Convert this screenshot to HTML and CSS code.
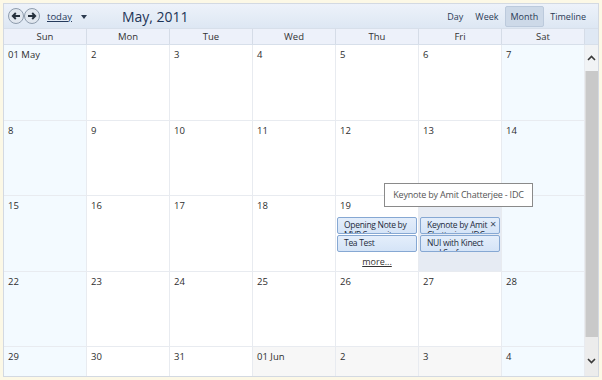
FILE: index.html
```html
<!DOCTYPE html>
<html lang="en">
<head>
    <meta charset="utf-8"/>
    <title>Scheduler - Month view</title>
    <link rel="stylesheet" href="styles.css">
</head>
<body>
    <div class="scheduler">
        <div class="toolbar">
            <div class="nav">
                <span class="navBtn">
                    <svg width="16" height="16" viewBox="0 0 16 16"><circle cx="8" cy="8" r="7.5" fill="#e1e7ef" stroke="#8e9cad"/><path d="M12 8H5M7.8 5L4.8 8L7.8 11" stroke="#26303c" stroke-width="1.9" fill="none"/></svg>
                </span>
                <span class="navBtn">
                    <svg width="16" height="16" viewBox="0 0 16 16"><circle cx="8" cy="8" r="7.5" fill="#e1e7ef" stroke="#8e9cad"/><path d="M4 8H11M8.2 5L11.2 8L8.2 11" stroke="#26303c" stroke-width="1.9" fill="none"/></svg>
                </span>
            </div>
            <a class="today" href="#">today</a>
            <span class="caret"></span>
            <span class="title">May, 2011</span>
            <div class="views">
                <span class="view">Day</span>
                <span class="view">Week</span>
                <span class="view selected">Month</span>
                <span class="view">Timeline</span>
            </div>
        </div>

        <div class="header">
            <div class="days">
                <div>Sun</div><div>Mon</div><div>Tue</div><div>Wed</div><div>Thu</div><div>Fri</div><div>Sat</div>
            </div>
            <div class="corner"></div>
        </div>

        <div class="body">
            <div class="month">
                <div class="cell weekend">01 May</div>
                <div class="cell">2</div>
                <div class="cell">3</div>
                <div class="cell">4</div>
                <div class="cell">5</div>
                <div class="cell">6</div>
                <div class="cell weekend">7</div>

                <div class="cell weekend">8</div>
                <div class="cell">9</div>
                <div class="cell">10</div>
                <div class="cell">11</div>
                <div class="cell">12</div>
                <div class="cell">13</div>
                <div class="cell weekend">14</div>

                <div class="cell weekend">15</div>
                <div class="cell">16</div>
                <div class="cell">17</div>
                <div class="cell">18</div>
                <div class="cell">
                    <div class="date">19</div>
                    <div class="events">
                        <div class="event">Opening Note by MVP Summit</div>
                        <div class="event">Tea Test</div>
                        <a class="more" href="#">more...</a>
                    </div>
                </div>
                <div class="cell active">
                    <div class="date hidden">20</div>
                    <div class="events">
                        <div class="event closable">Keynote by Amit Chatterjee - IDC<span class="close">×</span></div>
                        <div class="event">NUI with Kinect and Surface</div>
                    </div>
                </div>
                <div class="cell weekend"></div>

                <div class="cell weekend">22</div>
                <div class="cell">23</div>
                <div class="cell">24</div>
                <div class="cell">25</div>
                <div class="cell">26</div>
                <div class="cell">27</div>
                <div class="cell weekend">28</div>

                <div class="cell weekend">29</div>
                <div class="cell">30</div>
                <div class="cell">31</div>
                <div class="cell other">01 Jun</div>
                <div class="cell other">2</div>
                <div class="cell other">3</div>
                <div class="cell weekend">4</div>
            </div>
            <div class="scrollbar">
                <div class="arrow up">
                    <svg width="9" height="6" viewBox="0 0 9 6"><path d="M1 5L4.5 1.5L8 5" stroke="#3a3a3a" stroke-width="1.6" fill="none"/></svg>
                </div>
                <div class="thumb"></div>
                <div class="track"></div>
                <div class="arrow down">
                    <svg width="9" height="6" viewBox="0 0 9 6"><path d="M1 1L4.5 4.5L8 1" stroke="#3a3a3a" stroke-width="1.6" fill="none"/></svg>
                </div>
            </div>
            <div class="tooltip">Keynote by Amit Chatterjee - IDC</div>
        </div>
    </div>
</body>
</html>
```

FILE: styles.css
```css
*{
    margin: 0;
    padding: 0;
    box-sizing: border-box;
}
body{
    background: #fcf8e6;
    font-family: "Open Sans", "Noto Sans", sans-serif;
    font-size: 9px;
    color: #2e2e2e;
    padding: 3px;
    width: 602px;
    height: 380px;
}
.scheduler{
    display: flex;
    flex-direction: column;
    height: 374px;
    border: 1px solid #d3d9e2;
    background: white;
}
.toolbar{
    display: flex;
    align-items: center;
    height: 24px;
    padding: 0 0 0 4px;
    background: linear-gradient(#edf2fa, #dde7f3);
}
.nav{
    display: flex;
}
.navBtn{
    display: flex;
}
.today{
    margin-left: 7px;
    color: #253a5c;
    font-size: 9.5px;
}
.caret{
    margin-left: 9px;
    border: 3.5px solid transparent;
    border-top: 4px solid #2b3a4e;
    border-bottom: 0;
    margin-top: 1px;
}
.title{
    margin-left: 35px;
    font-size: 14px;
    color: #1d3557;
}
.views{
    display: flex;
    align-items: center;
    margin-left: auto;
    margin-right: 6px;
}
.view{
    padding: 3px 6px;
    color: #2a3a55;
    font-size: 9px;
}
.view.selected{
    background: #cdd9e8;
    border: 1px solid #bccadc;
    border-radius: 2px;
    padding: 3px 5px;
}
.header{
    display: flex;
    height: 17px;
    background: #edf1fa;
    border-top: 1px solid #d7dfea;
    border-bottom: 1px solid #d7dfea;
}
.days{
    flex: 1;
    display: grid;
    grid-template-columns: repeat(7, 1fr);
}
.days div{
    text-align: center;
    line-height: 15px;
    border-right: 1px solid #d5dce7;
    color: #333;
    font-size: 9.5px;
}
.corner{
    width: 13px;
    background: #dfe8f4;
}
.body{
    position: relative;
    flex: 1;
    display: flex;
    overflow: hidden;
}
.month{
    flex: 1;
    display: grid;
    grid-template-columns: repeat(7, 1fr);
    grid-auto-rows: 75.5px;
}
.cell{
    padding: 3px 4px;
    border-right: 1px solid #e8ebf0;
    border-bottom: 1px solid #e8ebf0;
    color: #2e2e2e;
    font-size: 9.5px;
    line-height: 13px;
}
.hidden{
    visibility: hidden;
}
.weekend{
    background: #f3faff;
}
.active{
    background: #e6ebf3;
}
.other{
    background: #f7f7f7;
}
.events{
    display: flex;
    flex-direction: column;
    gap: 1px;
    margin: 5px -3px 0;
}
.event{
    position: relative;
    height: 17px;
    padding: 2px 2px 0 6px;
    overflow: hidden;
    background: linear-gradient(#e4eefb, #d5e4f7);
    border: 1px solid #86a8d3;
    border-radius: 2px;
    color: #1e2b3c;
    font-size: 8.5px;
    letter-spacing: -0.3px;
    line-height: 10px;
}
.closable{
    padding-right: 11px;
}
.close{
    position: absolute;
    right: 3px;
    top: 1px;
    font-size: 11px;
    color: #3b4a5e;
}
.more{
    margin-top: 2px;
    text-align: center;
    color: #333;
    font-size: 9px;
}
.scrollbar{
    display: flex;
    flex-direction: column;
    width: 13px;
    background: #ececec;
}
.arrow{
    display: flex;
    justify-content: center;
    align-items: center;
    height: 26px;
    background: #f1f3f5;
}
.arrow.down{
    height: 30px;
    background: #ececec;
}
.thumb{
    height: 266px;
    background: #c9c9c9;
    border-left: 1px solid #dcdcdc;
}
.track{
    flex: 1;
}
.tooltip{
    position: absolute;
    left: 380px;
    top: 138px;
    width: 149px;
    height: 24px;
    border: 1px solid #8a8a8a;
    background: white;
    color: #555;
    font-size: 9px;
    letter-spacing: -0.2px;
    line-height: 21px;
    text-align: center;
    white-space: nowrap;
}
```
